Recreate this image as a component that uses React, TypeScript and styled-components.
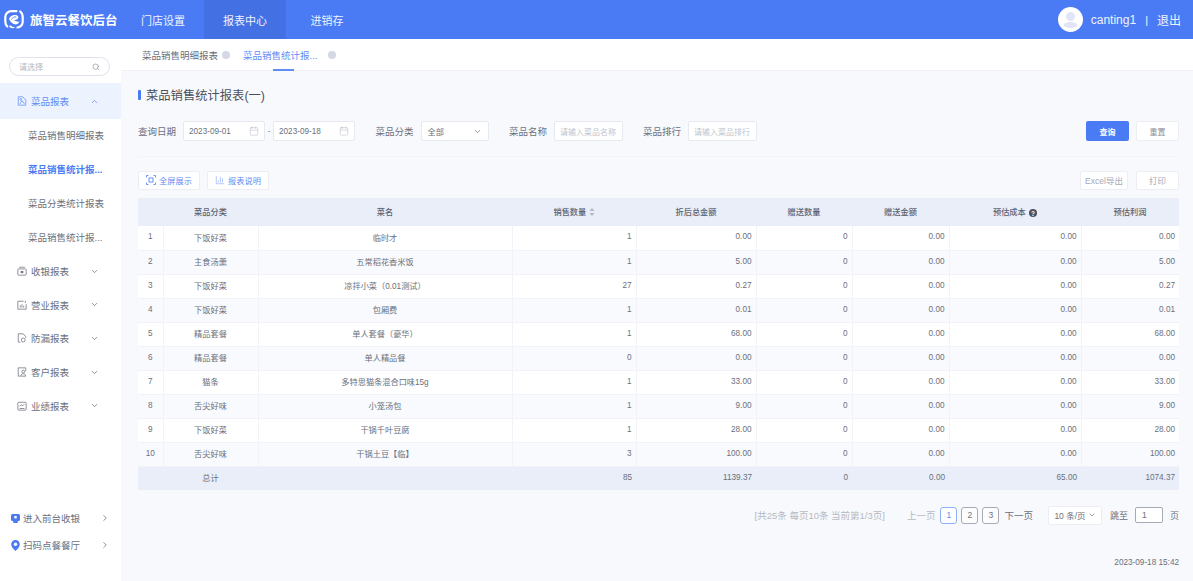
import React from 'react';
import styled, { createGlobalStyle } from 'styled-components';
import { Search, ChevronUp, ChevronDown, ChevronRight, Calendar, ChartColumn } from 'lucide-react';

const GlobalStyle = createGlobalStyle`
  html, body {
    margin: 0;
    padding: 0;
    height: 100%;
    background: #f8f9fd;
    font-family: "Liberation Sans", "Noto Sans CJK SC", sans-serif;
    color: #5c6270;
  }
  * { box-sizing: border-box; }
`;

const rows = [
  ['1', '下饭好菜', '临时才', '1', '0.00', '0', '0.00', '0.00', '0.00'],
  ['2', '主食汤羹', '五常稻花香米饭', '1', '5.00', '0', '0.00', '0.00', '5.00'],
  ['3', '下饭好菜', '凉拌小菜（0.01测试）', '27', '0.27', '0', '0.00', '0.00', '0.27'],
  ['4', '下饭好菜', '包厢费', '1', '0.01', '0', '0.00', '0.00', '0.01'],
  ['5', '精品套餐', '单人套餐（豪华）', '1', '68.00', '0', '0.00', '0.00', '68.00'],
  ['6', '精品套餐', '单人精品餐', '0', '0.00', '0', '0.00', '0.00', '0.00'],
  ['7', '猫条', '多特思猫条混合口味15g', '1', '33.00', '0', '0.00', '0.00', '33.00'],
  ['8', '舌尖好味', '小笼汤包', '1', '9.00', '0', '0.00', '0.00', '9.00'],
  ['9', '下饭好菜', '干锅千叶豆腐', '1', '28.00', '0', '0.00', '0.00', '28.00'],
  ['10', '舌尖好味', '干锅土豆【临】', '3', '100.00', '0', '0.00', '0.00', '100.00'],
];

const colWidths = [25, 95, 254, 124, 120, 96, 97, 132, 98];

const subMenus = [
  { label: '菜品销售明细报表' },
  { label: '菜品销售统计报...', active: true },
  { label: '菜品分类统计报表' },
  { label: '菜品销售统计报...' },
];

const GroupIcon = ({ kind }: { kind: string }) => (
  <MenuGlyph viewBox="0 0 12 12" fill="none" stroke="currentColor" strokeWidth="0.9">
    {kind === 'dish' && (
      <>
        <path d="M7 1H1.500v10h9V5" />
        <path d="M7 1l3.500 4M3.500 9.500L6 5.500l3 4" />
        <circle cx="4.500" cy="4" r="1" />
      </>
    )}
    {kind === 'cash' && (
      <>
        <rect x="1" y="3.500" width="10" height="7.500" rx="1" />
        <path d="M2.500 1.500h7" />
        <rect x="4.500" y="6" width="3" height="2.500" fill="currentColor" stroke="none" />
      </>
    )}
    {kind === 'biz' && (
      <>
        <path d="M8 1.500H1v9.500h10V5" />
        <path d="M4 9V6.500M6 9V5M8 9V7M10 1v2.500" />
      </>
    )}
    {kind === 'leak' && (
      <>
        <path d="M7.500 1H1.500v10H4M7.500 1l3 3.500V6" />
        <circle cx="7.500" cy="8.500" r="2.300" />
      </>
    )}
    {kind === 'customer' && (
      <>
        <path d="M10.500 5V1H1.500v10H4" />
        <circle cx="7.500" cy="5.500" r="1.700" />
        <path d="M4.500 11c.4-2 1.700-3 3-3s2.600 1 3 3z" />
      </>
    )}
    {kind === 'perf' && (
      <>
        <rect x="1" y="1.500" width="10" height="9.500" rx="1" />
        <path d="M3 6.500l2-2 2 1.200 2-2.200M3 9h6" />
      </>
    )}
  </MenuGlyph>
);

export default function App() {
  return (
    <Page>
      <GlobalStyle />
      <TopBar>
        <Brand>
          <svg width="20" height="19" viewBox="0 0 20 19" fill="none">
            <path d="M12.500 1.200H7.500C4 1.200 1.300 3.800 1.300 7v4.500c0 2 .7 3.800 2 5" stroke="#fff" strokeWidth="2.200" strokeLinecap="round" />
            <path d="M16.200 1.500c1.500 1.200 2.500 3 2.500 5.500v4.500c0 3.200-2 5.500-5.200 6" stroke="#fff" strokeWidth="2.200" strokeLinecap="round" />
            <path d="M5 9c1-3 4-4.500 7-4 2 .4 3 2 2 3.500-.8 1.200-2.500 1.500-4.500 1.500 2 1 4 2 6 1.500-1 2.500-3 3.200-5 2.800-2.500-.6-4-2.600-5.500-5.300z" fill="#fff" />
            <path d="M6 15c1.500 1.300 3.500 2.400 5.500 2.700-2 .7-4 .6-5.500-.2-.8-.7-.6-1.700 0-2.500z" fill="#fff" />
            <path d="M7.500 9.500c1-2 2.800-3 4.800-2.500" stroke="#4a7bf5" strokeWidth="0.900" />
          </svg>
          <BrandName>旅智云餐饮后台</BrandName>
        </Brand>
        <NavItem>门店设置</NavItem>
        <NavItem $active>报表中心</NavItem>
        <NavItem>进销存</NavItem>
        <UserArea>
          <Avatar>
            <svg width="25" height="25" viewBox="0 0 25 25">
              <circle cx="12.500" cy="9.500" r="4.500" fill="#e0e5f7" />
              <ellipse cx="12.500" cy="18" rx="7" ry="3" fill="#e0e5f7" />
            </svg>
          </Avatar>
          <UserName>canting1</UserName>
          <UserSep>|</UserSep>
          <UserName>退出</UserName>
        </UserArea>
      </TopBar>
      <Body>
        <Sidebar>
          <SideSearch>
            <span>请选择</span>
            <Search size={8} color="#8b909c" />
          </SideSearch>
          <MenuGroup $open>
            <GroupIcon kind="dish" />
            <GroupLabel>菜品报表</GroupLabel>
            <ChevronUp size={9} />
          </MenuGroup>
          {subMenus.map((item, i) => (
            <SubMenu key={i} $active={item.active}>
              {item.label}
            </SubMenu>
          ))}
          {[
            ['cash', '收银报表'],
            ['biz', '营业报表'],
            ['leak', '防漏报表'],
            ['customer', '客户报表'],
            ['perf', '业绩报表'],
          ].map(([kind, label]) => (
            <MenuGroup key={kind}>
              <GroupIcon kind={kind} />
              <GroupLabel>{label}</GroupLabel>
              <ChevronDown size={9} />
            </MenuGroup>
          ))}
          <SideFoot>
            <FootLink>
              <svg width="9" height="9" viewBox="0 0 9 9">
                <rect width="9" height="7" rx="1.500" fill="#4a7bf5" />
                <rect x="2" y="7" width="5" height="2" rx="1" fill="#4a7bf5" />
                <rect x="3.300" y="2" width="2.400" height="2.400" fill="#fff" />
              </svg>
              <FootLabel>进入前台收银</FootLabel>
              <ChevronRight size={10} color="#777c88" />
            </FootLink>
            <FootLink>
              <svg width="9" height="11" viewBox="0 0 9 11">
                <path d="M4.500 0a4.300 4.300 0 0 1 4.300 4.300c0 2.700-2.500 5-4.300 6.700C2.700 9.300.2 7 .2 4.300A4.300 4.300 0 0 1 4.500 0z" fill="#4a7bf5" />
                <circle cx="4.500" cy="4.300" r="1.700" fill="#fff" />
              </svg>
              <FootLabel>扫码点餐餐厅</FootLabel>
              <ChevronRight size={10} color="#777c88" />
            </FootLink>
          </SideFoot>
        </Sidebar>
        <Main>
          <Tabs>
            <Tab>
              菜品销售明细报表
              <TabClose />
            </Tab>
            <Tab $active>
              菜品销售统计报...
              <TabClose />
              <TabLine />
            </Tab>
          </Tabs>
          <Content>
            <Title>菜品销售统计报表(一)</Title>
            <FilterRow>
              <FieldGroup>
                <FieldLabel>查询日期</FieldLabel>
                <DateRange>
                  <DateInput>
                    2023-09-01
                    <Calendar size={10} strokeWidth={1} color="#a5aab5" />
                  </DateInput>
                  <span>-</span>
                  <DateInput>
                    2023-09-18
                    <Calendar size={10} strokeWidth={1} color="#a5aab5" />
                  </DateInput>
                </DateRange>
              </FieldGroup>
              <FieldGroup>
                <FieldLabel>菜品分类</FieldLabel>
                <SelectBox>
                  全部
                  <ChevronDown size={9} color="#777c88" />
                </SelectBox>
              </FieldGroup>
              <FieldGroup>
                <FieldLabel>菜品名称</FieldLabel>
                <TextBox>请输入菜品名称</TextBox>
              </FieldGroup>
              <FieldGroup>
                <FieldLabel>菜品排行</FieldLabel>
                <TextBox>请输入菜品排行</TextBox>
              </FieldGroup>
              <FilterActions>
                <PrimaryButton>查询</PrimaryButton>
                <GhostButton>重置</GhostButton>
              </FilterActions>
            </FilterRow>
            <Toolbar>
              <ToolButton>
                <svg width="10" height="10" viewBox="0 0 10 10" fill="none" stroke="#4a7bf5" strokeWidth="0.8">
                  <path d="M.5 2.500V.5h2M7.500.5h2v2M9.500 7.500v2h-2M2.500 9.500h-2v-2" />
                  <rect x="3" y="3" width="4" height="4" />
                </svg>
                全屏展示
              </ToolButton>
              <ToolButton>
                <ChartColumn size={10} strokeWidth={1} color="#4a7bf5" />
                报表说明
              </ToolButton>
              <ToolSpacer />
              <ExportButton>Excel导出</ExportButton>
              <PrintButton>打印</PrintButton>
            </Toolbar>
            <Table>
              <colgroup>
                {colWidths.map((w, i) => (
                  <col key={i} width={w} />
                ))}
              </colgroup>
              <thead>
                <tr>
                  <Th />
                  <Th>菜品分类</Th>
                  <Th>菜名</Th>
                  <Th>
                    销售数量{' '}
                    <SortGlyph width="6" height="8" viewBox="0 0 6 8" fill="#b4b8c2">
                      <path d="M3 0l2.500 3h-5zM3 8L.5 5h5z" />
                    </SortGlyph>
                  </Th>
                  <Th>折后总金额</Th>
                  <Th>赠送数量</Th>
                  <Th>赠送金额</Th>
                  <Th>
                    预估成本 <HelpDot>?</HelpDot>
                  </Th>
                  <Th>预估利润</Th>
                </tr>
              </thead>
              <tbody>
                {rows.map((row, idx) => (
                  <Row key={row[0]} $even={idx % 2 === 1}>
                    {row.map((cell, i) => (
                      <Td key={i} $right={i > 2}>
                        {cell}
                      </Td>
                    ))}
                  </Row>
                ))}
                <tr>
                  <TotalCell />
                  <TotalCell $center>总计</TotalCell>
                  <TotalCell />
                  <TotalCell>85</TotalCell>
                  <TotalCell>1139.37</TotalCell>
                  <TotalCell>0</TotalCell>
                  <TotalCell>0.00</TotalCell>
                  <TotalCell>65.00</TotalCell>
                  <TotalCell>1074.37</TotalCell>
                </tr>
              </tbody>
            </Table>
            <Pager>
              <PagerInfo>[共25条 每页10条 当前第1/3页]</PagerInfo>
              <PagerPrev>上一页</PagerPrev>
              <PageNum $active>1</PageNum>
              <PageNum>2</PageNum>
              <PageNum>3</PageNum>
              <PagerNext>下一页</PagerNext>
              <PageSize>
                10 条/页
                <ChevronDown size={8} />
              </PageSize>
              <PagerText>跳至</PagerText>
              <JumpBox>1</JumpBox>
              <PagerText>页</PagerText>
            </Pager>
            <Stamp>2023-09-18 15:42</Stamp>
          </Content>
        </Main>
      </Body>
    </Page>
  );
}

const Page = styled.div`
  display: flex;
  flex-direction: column;
  height: 581px;
  overflow: hidden;
`;

const TopBar = styled.header`
  display: flex;
  align-items: stretch;
  height: 39px;
  flex: none;
  background: #4a7bf5;
  color: #fff;
`;

const Brand = styled.div`
  display: flex;
  align-items: center;
  gap: 6px;
  width: 122px;
  padding-left: 4px;
`;

const BrandName = styled.span`
  font-size: 12.500px;
  font-weight: 700;
  white-space: nowrap;
`;

const NavItem = styled.div<{ $active?: boolean }>`
  display: flex;
  align-items: center;
  justify-content: center;
  width: 82px;
  font-size: 11px;
  color: #eef3ff;
  background: ${p => (p.$active ? '#4371e4' : 'transparent')};
`;

const UserArea = styled.div`
  display: flex;
  align-items: center;
  margin-left: auto;
  padding-right: 12px;
`;

const Avatar = styled.div`
  width: 25px;
  height: 25px;
  margin-right: 8px;
  border-radius: 50%;
  background: #fff;
  overflow: hidden;
`;

const UserName = styled.span`
  font-size: 12px;
  color: #eef3ff;
`;

const UserSep = styled.span`
  margin: 0 9px;
  font-size: 11px;
  color: #eef3ff;
`;

const Body = styled.div`
  display: flex;
  flex: 1;
  min-height: 0;
`;

const Sidebar = styled.aside`
  display: flex;
  flex-direction: column;
  width: 121px;
  flex: none;
  padding-top: 18px;
  background: #fff;
`;

const SideSearch = styled.div`
  display: flex;
  align-items: center;
  justify-content: space-between;
  height: 19px;
  margin: 0 11px 7px 9px;
  padding: 0 9px;
  font-size: 8px;
  color: #b4b8c2;
  background: #fff;
  border: 1px solid #dfe2ea;
  border-radius: 10px;
`;

const MenuGroup = styled.div<{ $open?: boolean }>`
  display: flex;
  align-items: center;
  height: ${p => (p.$open ? '36px' : '33.600px')};
  padding: 0 22px ${p => (p.$open ? '0' : '1px')} 17px;
  color: ${p => (p.$open ? '#5f8cf6' : '#6b707c')};
  background: ${p => (p.$open ? '#edf3fe' : 'transparent')};
`;

const MenuGlyph = styled.svg`
  width: 10px;
  height: 10px;
  margin-right: 4px;
  flex: none;
`;

const GroupLabel = styled.span`
  flex: 1;
  font-size: 9.500px;
`;

const SubMenu = styled.div<{ $active?: boolean }>`
  display: flex;
  align-items: center;
  height: 34px;
  padding: 0 0 2px 28px;
  font-size: 9.500px;
  font-weight: ${p => (p.$active ? 700 : 400)};
  color: ${p => (p.$active ? '#4a7bf5' : '#6b707c')};
  white-space: nowrap;
`;

const SideFoot = styled.div`
  display: flex;
  flex-direction: column;
  gap: 9px;
  margin-top: auto;
  padding: 0 11px 27px 11px;
`;

const FootLink = styled.div`
  display: flex;
  align-items: center;
  height: 18px;
`;

const FootLabel = styled.span`
  flex: 1;
  margin-left: 3px;
  font-size: 9.500px;
  color: #6b707c;
`;

const Main = styled.main`
  display: flex;
  flex-direction: column;
  flex: 1;
  min-width: 0;
`;

const Tabs = styled.nav`
  display: flex;
  height: 32px;
  flex: none;
  padding-left: 21px;
  gap: 13px;
  background: #fff;
  border-bottom: 1px solid #f0f2f8;
`;

const Tab = styled.div<{ $active?: boolean }>`
  position: relative;
  display: flex;
  align-items: center;
  gap: ${p => (p.$active ? '11px' : '4px')};
  padding-top: 1px;
  font-size: 9.500px;
  color: ${p => (p.$active ? '#5f8cf6' : '#6b707c')};
`;

const TabClose = styled.i`
  width: 8px;
  height: 8px;
  border-radius: 50%;
  background: #d3d8e4;
`;

const TabLine = styled.i`
  position: absolute;
  left: 30px;
  bottom: -1px;
  width: 21px;
  height: 2px;
  background: #5f8cf6;
`;

const Content = styled.div`
  display: flex;
  flex-direction: column;
  flex: 1;
  padding: 0 14px 0 17px;
`;

const Title = styled.h1`
  display: flex;
  align-items: center;
  height: 20px;
  margin: 14px 0 0;
  font-size: 12.300px;
  font-weight: 400;
  color: #4b505c;

  &::before {
    content: '';
    width: 3px;
    height: 10px;
    margin-right: 5px;
    border-radius: 1px;
    background: #4a7bf5;
  }
`;

const FilterRow = styled.div`
  display: flex;
  align-items: center;
  gap: 20.500px;
  margin-top: 16px;
  padding-bottom: 15px;
  border-bottom: 1px solid #f2f4f9;
`;

const FieldGroup = styled.div`
  display: flex;
  align-items: center;
  gap: 7px;
`;

const FieldLabel = styled.span`
  font-size: 9.500px;
  color: #6b707c;
  white-space: nowrap;
`;

const DateRange = styled.div`
  display: flex;
  align-items: center;
  gap: 2.500px;
  font-size: 9px;
  color: #8b909c;
`;

const boxStyle = `
  display: flex;
  align-items: center;
  height: 20px;
  background: #fff;
  border: 1px solid #e6e9f0;
  border-radius: 2px;
`;

const DateInput = styled.div`
  ${boxStyle}
  justify-content: space-between;
  width: 82px;
  padding: 0 5px;
  font-size: 8.200px;
  color: #6b707c;
`;

const SelectBox = styled.div`
  ${boxStyle}
  justify-content: space-between;
  width: 68px;
  padding: 0 6px;
  font-size: 8.200px;
  color: #6b707c;
`;

const TextBox = styled.div`
  ${boxStyle}
  width: 68.500px;
  padding: 0 5px;
  font-size: 8px;
  color: #c0c4ce;
  white-space: nowrap;
  overflow: hidden;
`;

const FilterActions = styled.div`
  display: flex;
  gap: 7px;
  margin-left: auto;
`;

const PrimaryButton = styled.button`
  width: 43px;
  height: 20px;
  padding: 0;
  font: 700 8px "Liberation Sans", "Noto Sans CJK SC", sans-serif;
  color: #fff;
  background: #4a7bf5;
  border: 0;
  border-radius: 2px;
`;

const GhostButton = styled.button`
  width: 43px;
  height: 20px;
  padding: 0;
  font: 400 8px "Liberation Sans", "Noto Sans CJK SC", sans-serif;
  color: #8b909c;
  background: #fff;
  border: 1px solid #eceef4;
  border-radius: 2px;
`;

const Toolbar = styled.div`
  display: flex;
  gap: 7px;
  align-items: center;
  height: 19px;
  margin: 14px 0 8px;
`;

const ToolButton = styled.div`
  ${boxStyle}
  justify-content: center;
  gap: 3px;
  width: 62px;
  height: 19px;
  padding-bottom: 1px;
  font-size: 8.200px;
  color: #5f8cf6;
  border-color: #eceef4;
`;

const ToolSpacer = styled.div`
  flex: 1;
`;

const ExportButton = styled.div`
  ${boxStyle}
  justify-content: center;
  width: 48px;
  height: 19px;
  margin-right: 1px;
  padding-bottom: 1px;
  font-size: 8.500px;
  color: #a5aab5;
  border-color: #eceef4;
`;

const PrintButton = styled(ExportButton)`
  width: 43px;
  margin-right: 0;
`;

const Table = styled.table`
  width: 1041px;
  table-layout: fixed;
  border-collapse: collapse;
  font-size: 8.200px;
`;

const Th = styled.th`
  height: 28px;
  padding: 0 0 2px;
  font-size: 8.200px;
  font-weight: 500;
  text-align: center;
  color: #5c6270;
  background: #e9eef9;
`;

const SortGlyph = styled.svg`
  vertical-align: -1px;
`;

const HelpDot = styled.span`
  display: inline-flex;
  align-items: center;
  justify-content: center;
  width: 8px;
  height: 8px;
  margin-left: 1px;
  vertical-align: -1px;
  font-size: 6.500px;
  font-weight: 700;
  color: #fff;
  background: #4b505c;
  border-radius: 50%;
`;

const Row = styled.tr<{ $even?: boolean }>`
  background: ${p => (p.$even ? '#f9fafd' : '#fff')};
`;

const Td = styled.td<{ $right?: boolean }>`
  height: 24px;
  padding: 0 4px 2px;
  text-align: ${p => (p.$right ? 'right' : 'center')};
  color: #6b707c;
  border: 1px solid #f1f3f8;
  border-top: 0;
  white-space: nowrap;
  &:first-child { border-left: 0; }
  &:last-child { border-right: 0; }
`;

const TotalCell = styled.td<{ $center?: boolean }>`
  height: 24px;
  padding: 0 4px 2px;
  text-align: ${p => (p.$center ? 'center' : 'right')};
  color: #6b707c;
  background: #e9eef9;
`;

const Pager = styled.div`
  display: flex;
  align-items: center;
  justify-content: flex-end;
  height: 20px;
  margin-top: 15px;
  font-size: 9.500px;
`;

const PagerInfo = styled.span`
  margin-right: 22px;
  color: #b5b9c4;
  white-space: nowrap;
`;

const PagerPrev = styled.span`
  margin-right: 5px;
  color: #b5b9c4;
`;

const PagerNext = styled.span`
  margin-left: 5px;
  margin-right: 15px;
  color: #6b707c;
`;

const PageNum = styled.span<{ $active?: boolean }>`
  display: flex;
  align-items: center;
  justify-content: center;
  width: 17px;
  height: 17px;
  margin-left: ${p => (p.$active ? '0' : '4px')};
  font-size: 8.500px;
  color: ${p => (p.$active ? '#5f8cf6' : '#6b707c')};
  background: #fdfdfe;
  border: 1px solid ${p => (p.$active ? '#8fb0f8' : '#a5aab5')};
  border-radius: 3px;
`;

const PageSize = styled.div`
  display: flex;
  align-items: center;
  justify-content: center;
  gap: 2px;
  width: 54px;
  height: 19px;
  margin-right: 8px;
  font-size: 8.500px;
  color: #6b707c;
  background: #fff;
  border: 1px solid #eceef4;
  border-radius: 2px;
`;

const PagerText = styled.span`
  font-size: 9px;
  color: #6b707c;
`;

const JumpBox = styled.div`
  display: flex;
  align-items: center;
  width: 28px;
  height: 16px;
  margin: 0 7px;
  padding-left: 6px;
  font-size: 8.500px;
  color: #6b707c;
  background: #fff;
  border: 1px solid #a5aab5;
  border-radius: 2px;
`;

const Stamp = styled.div`
  margin-top: 33px;
  font-size: 8.200px;
  line-height: 10px;
  text-align: right;
  color: #6b707c;
`;
